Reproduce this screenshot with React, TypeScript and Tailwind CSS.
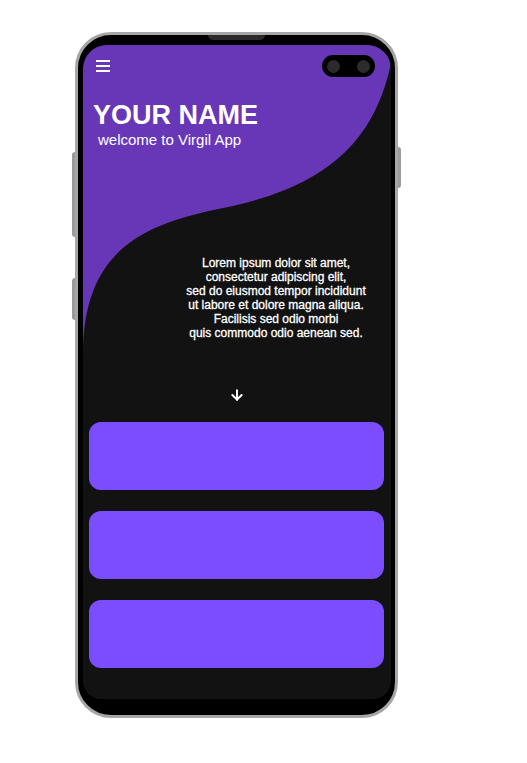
import { ArrowDown } from "lucide-react";

const cards = [1, 2, 3];

const App = () => {
  return (
    <div className="min-h-screen bg-white pt-[32px] pl-[75px] font-['Liberation_Sans',Arial,sans-serif]">
      <div className="relative flex h-[686px] w-[323px] flex-col rounded-[36px] border-[3px] border-[#a6a6a6] bg-black pt-[10px] pr-[4px] pb-[16px] pl-[5px]">
        {/* side buttons */}
        <div className="absolute left-[-6px] top-[117px] h-[85px] w-[3px] rounded-l bg-[#9a9a9a]" />
        <div className="absolute left-[-6px] top-[243px] h-[42px] w-[3px] rounded-l bg-[#9a9a9a]" />
        <div className="absolute right-[-6px] top-[112px] h-[41px] w-[3px] rounded-r bg-[#9a9a9a]" />
        {/* speaker notch */}
        <div className="absolute left-[130px] top-0 h-[5px] w-[57px] rounded-b-md bg-[#2a2a2a]" />

        <div className="relative flex-1 overflow-hidden rounded-t-[24px] rounded-b-[18px] bg-[#121212]">
          <svg
            className="absolute inset-0"
            width="308"
            height="653"
            viewBox="0 0 308 653"
          >
            <path
              d="M0 0H308V18C292 95 245 142 140 163C60 179 0 205 0 310Z"
              fill="#6737b7"
            />
          </svg>

          {/* camera */}
          <div className="absolute left-[239px] top-[10px] flex h-[22px] w-[53px] items-center justify-between rounded-full bg-black px-[5px]">
            <span className="h-[13px] w-[13px] rounded-full bg-[#2b2b2b]" />
            <span className="h-[13px] w-[13px] rounded-full bg-[#2b2b2b]" />
          </div>

          <div className="relative flex flex-col">
            <div className="ml-[13px] mt-[15px] flex w-[14px] flex-col gap-[3px]">
              <span className="h-[2px] bg-white" />
              <span className="h-[2px] bg-white" />
              <span className="h-[2px] bg-white" />
            </div>

            <h1 className="ml-[10px] mt-[30px] text-[27px] font-bold leading-[27px] text-white">
              YOUR NAME
            </h1>
            <p className="ml-[15px] mt-[2px] text-[15px] leading-[18px] text-white">
              welcome to Virgil App
            </p>

            <p className="ml-[93px] mt-[107px] w-[200px] text-center text-[12px] leading-[14px] text-white [-webkit-text-stroke:0.3px_white]">
              Lorem ipsum dolor sit amet,
              <br />
              consectetur adipiscing elit,
              <br />
              sed do eiusmod tempor incididunt
              <br />
              ut labore et dolore magna aliqua.
              <br />
              Facilisis sed odio morbi
              <br />
              quis commodo odio aenean sed.
            </p>

            <div className="mx-auto mt-[47px] text-white">
              <ArrowDown size={16} strokeWidth={3} />
            </div>

            <div className="mt-[19px] flex flex-col gap-[21px] pl-[6px] pr-[7px]">
              {cards.map((c) => (
                <div key={c} className="h-[68px] rounded-[12px] bg-[#7c4dff]" />
              ))}
            </div>
          </div>
        </div>
      </div>
    </div>
  );
};

export default App;
